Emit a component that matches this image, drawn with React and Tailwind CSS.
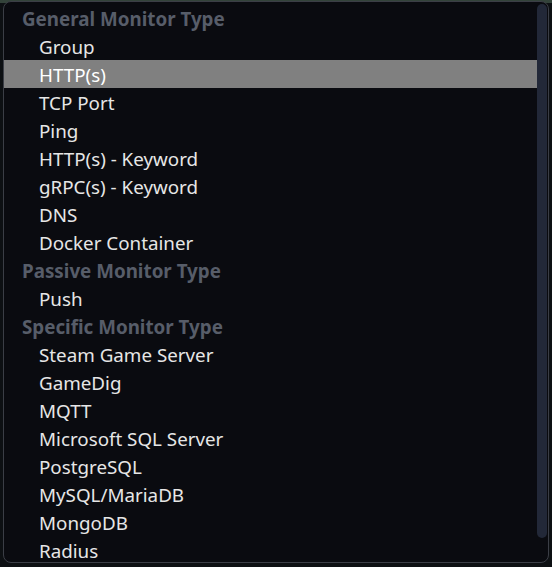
const groups = [
  {
    label: 'General Monitor Type',
    items: ['Group', 'HTTP(s)', 'TCP Port', 'Ping', 'HTTP(s) - Keyword', 'gRPC(s) - Keyword', 'DNS', 'Docker Container'],
  },
  { label: 'Passive Monitor Type', items: ['Push'] },
  {
    label: 'Specific Monitor Type',
    items: ['Steam Game Server', 'GameDig', 'MQTT', 'Microsoft SQL Server', 'PostgreSQL', 'MySQL/MariaDB', 'MongoDB', 'Radius'],
  },
];

const selected = 'HTTP(s)';

const App = () => {
  return (
    <div className="w-[552px] h-[567px] bg-[#0d1013] overflow-hidden relative" style={{ fontFamily: '"Noto Sans", "Open Sans", sans-serif' }}>
      <div className="h-[3px] bg-[#33433a]" />
      <div className="absolute left-[3px] top-[1px] w-[546px] h-[562px] bg-[#0a0b10] border border-[#3b3e46] rounded-[8px] overflow-hidden flex">
        <div className="flex-1 pt-[2px]">
          {groups.map((g) => (
            <div key={g.label}>
              <div className="h-[28px] flex items-center pt-[2px] pl-[18px] text-[18.8px] font-bold text-[#575d69]">{g.label}</div>
              {g.items.map((item) => (
                <div
                  key={item}
                  className={`h-[28px] flex items-center pt-[2px] pl-[35px] text-[18.8px] ${item === selected ? 'bg-[#808080] text-white' : 'text-[#e6e6e6]'}`}
                >
                  {item}
                </div>
              ))}
            </div>
          ))}
        </div>
        <div className="w-[11px] pt-[2px] pr-[1px]">
          <div className="w-[10px] h-[534px] rounded-full bg-[#222838]" />
        </div>
      </div>
    </div>
  );
};

export default App;
